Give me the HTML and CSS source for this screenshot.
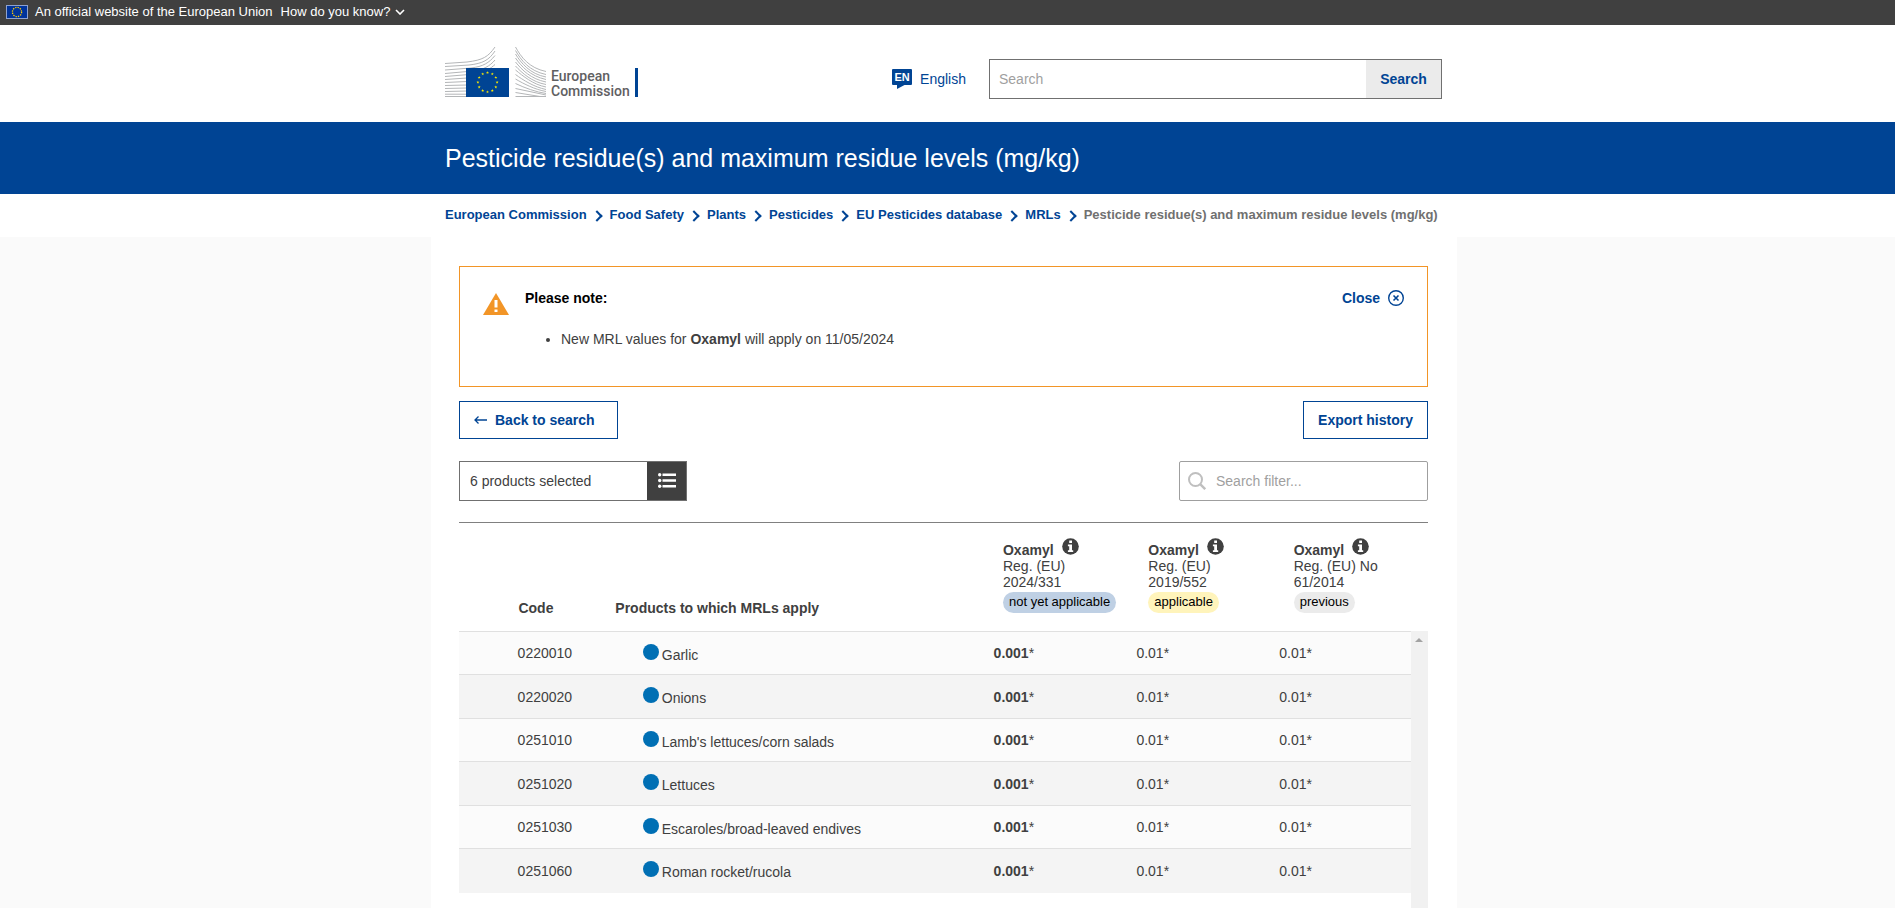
FILE: index.html
```html
<!DOCTYPE html>
<html lang="en">
<head>
<meta charset="utf-8">
<title>Pesticide residue(s) and maximum residue levels (mg/kg)</title>
<link rel="stylesheet" href="styles.css">
</head>
<body>
<svg class="defs" width="0" height="0" aria-hidden="true">
  <defs>
    <path id="star" d="M0-10 2.3-3.1H9.5L3.7 1.2 5.9 8.1 0 3.8-5.9 8.1-3.7 1.2-9.5-3.1H-2.3Z"/>
    <g id="stars">
      <use href="#star" transform="translate(0 -60)"/><use href="#star" transform="translate(30 -52)"/>
      <use href="#star" transform="translate(52 -30)"/><use href="#star" transform="translate(60 0)"/>
      <use href="#star" transform="translate(52 30)"/><use href="#star" transform="translate(30 52)"/>
      <use href="#star" transform="translate(0 60)"/><use href="#star" transform="translate(-30 52)"/>
      <use href="#star" transform="translate(-52 30)"/><use href="#star" transform="translate(-60 0)"/>
      <use href="#star" transform="translate(-52 -30)"/><use href="#star" transform="translate(-30 -52)"/>
    </g>
    <symbol id="info" viewBox="0 0 17 17">
      <circle cx="8.5" cy="8.5" r="8.3" fill="#404040"/>
      <path fill="#fff" d="M7.2 2.6h2.8v2.4H7.2zM5.9 6.4H10v5.8h1.2v1.9H5.9v-1.9h1.3V8.3H5.9z"/>
    </symbol>
  </defs>
</svg>

<div class="globan">
  <svg class="globan-flag" width="20" height="12" viewBox="0 0 20 12" aria-hidden="true">
    <path fill="#039" d="M0 0h20v12H0z"/>
    <circle cx="10" cy="6" r="4.600" fill="none" stroke="#fc0" stroke-width="1.300" stroke-dasharray="1.300 1.108"/>
  </svg>
  <span>An official website of the European Union</span>
  <button class="globan-more" type="button">How do you know?
    <svg width="10" height="6" viewBox="0 0 10 6" aria-hidden="true"><path d="M1 1l4 4 4-4" fill="none" stroke="#fff" stroke-width="1.6"/></svg>
  </button>
</div>

<header class="site-header">
  <div class="container header-row">
    <a class="logo" href="#" aria-label="European Commission">
      <svg width="102" height="52" viewBox="0 0 102 52" aria-hidden="true">
        <g fill="none" stroke="#b4b6b8">
          <path d="M0 16.5L22 15C38 13 43 10 50 0"/>
          <path d="M0 19.5L24 18C38 16.500 44 13 50 4"/>
          <path d="M0 23L26 21C38 19.500 44 16 50 8.500"/>
          <path d="M0 26.500L28 24C38 23 45 19 50 13"/>
          <path d="M0 29.500L30 27C40 26 46 21 50 17.500"/>
          <path d="M0 32.500L22 31M0 35.500L22 34.500M0 38.500L22 38M0 41.500L22 41M0 44.500L22 44M0 47.200H22M0 49.500H22"/>
          <path d="M70.500 0C76 10 84 21 101 24.500"/>
          <path d="M70.500 3.500C76 13 84 24 101 27.500"/>
          <path d="M70.500 7C76 16 85 27 101 30"/>
          <path d="M70.500 11C76 19 85 29 101 32.500"/>
          <path d="M70.500 15C77 23 86 32 101 35"/>
          <path d="M70.500 19C77 26 87 35 101 37.500"/>
          <path d="M70.500 23C78 29 88 37.500 101 40"/>
          <path d="M70.500 27.500C78 33 89 40 101 42.500"/>
          <path d="M70.500 32C79 37 90 42.500 101 44.500"/>
          <path d="M70.500 36.500C80 41 91 45 101 46.500M70.500 41.500L101 48M70.500 45.500L95 49.500M70.500 49.500H101"/>
        </g>
        <path fill="#004494" d="M21 21h43v29H21z"/>
        <g fill="#ffed00" transform="translate(42.500 35.300) scale(.16)"><use href="#stars"/></g>
      </svg>
      <span class="logo-text">European<br>Commission</span>
    </a>
    <div class="tools">
      <a class="lang" href="#">
        <span class="lang-icon" aria-hidden="true">
          <svg width="20" height="20" viewBox="0 0 20 20"><path fill="#004494" d="M1 0h18q1 0 1 1v14q0 1-1 1h-6.500L5 20v-4H1q-1 0-1-1V1q0-1 1-1z"/></svg>
          <span class="lang-code">EN</span>
        </span>
        English
      </a>
      <form class="search" role="search">
        <input type="search" placeholder="Search" aria-label="Search">
        <button type="button">Search</button>
      </form>
    </div>
  </div>
</header>

<div class="banner">
  <div class="container"><h1>Pesticide residue(s) and maximum residue levels (mg/kg)</h1></div>
</div>

<nav class="breadcrumb" aria-label="Breadcrumb">
  <ol class="container">
    <li><a href="#">European Commission</a></li>
    <li><a href="#">Food Safety</a></li>
    <li><a href="#">Plants</a></li>
    <li><a href="#">Pesticides</a></li>
    <li><a href="#">EU Pesticides database</a></li>
    <li><a href="#">MRLs</a></li>
    <li aria-current="page">Pesticide residue(s) and maximum residue levels (mg/kg)</li>
  </ol>
</nav>

<div class="page">
  <main class="panel">
    <section class="alert">
      <svg class="alert-icon" width="26" height="22" viewBox="0 0 26 22" aria-hidden="true">
        <path fill="#f29527" d="M13 0l13 22H0z"/><path fill="#fff" d="M11.500 7h3v7.500h-3zM11.500 16.500h3v2.500h-3z"/>
      </svg>
      <div class="alert-body">
        <h2>Please note:</h2>
        <ul><li>New MRL values for <strong>Oxamyl</strong> will apply on 11/05/2024</li></ul>
      </div>
      <button class="alert-close" type="button">Close
        <svg width="18" height="16" viewBox="0 1 18 16" aria-hidden="true"><g fill="none" stroke="#004494"><circle cx="9" cy="9" r="7.300" stroke-width="1.400"/><path d="M6.500 6.500l5 5m0-5l-5 5" stroke-width="1.600"/></g></svg>
      </button>
    </section>

    <div class="actions">
      <button class="btn btn-back" type="button">
        <svg width="13" height="8" viewBox="0 0 13 8" aria-hidden="true"><path d="M4.500.5L1 4l3.500 3.500M1 4h12" fill="none" stroke="#004494" stroke-width="1.300"/></svg>
        Back to search
      </button>
      <button class="btn" type="button">Export history</button>
    </div>

    <div class="filters">
      <div class="picker">
        <input type="text" value="6 products selected" aria-label="Products" readonly>
        <button type="button" aria-label="Choose products">
          <svg width="18" height="15" viewBox="0 0 18 15" aria-hidden="true"><g fill="#fff"><circle cx="1.700" cy="1.800" r="1.700"/><circle cx="1.700" cy="7.500" r="1.700"/><circle cx="1.700" cy="13.200" r="1.700"/><path d="M4.500.5h13.500v2.500H4.500zM4.500 6.200h13.500v2.500H4.500zM4.500 12h13.500v2.500H4.500z"/></g></svg>
        </button>
      </div>
      <div class="filter">
        <svg width="18" height="18" viewBox="0 0 18 18" aria-hidden="true"><g fill="none" stroke="#bfbfbf" stroke-width="2"><circle cx="7.500" cy="7.500" r="6.500"/><path d="M12.200 12.200l5 5" stroke-width="2.400"/></g></svg>
        <input type="text" placeholder="Search filter..." aria-label="Search filter">
      </div>
    </div>

    <table class="grid grid-head">
      <colgroup><col class="c-pad"><col class="c-code"><col><col class="c-val"><col class="c-val"><col class="c-val"></colgroup>
      <thead>
        <tr>
          <th></th>
          <th scope="col">Code</th>
          <th scope="col">Products to which MRLs apply</th>
          <th scope="col"><div class="sub">Oxamyl <svg width="17" height="17" aria-hidden="true"><use href="#info"/></svg></div><div class="reg">Reg. (EU) 2024/331</div><span class="pill pill-blue">not yet applicable</span></th>
          <th scope="col"><div class="sub">Oxamyl <svg width="17" height="17" aria-hidden="true"><use href="#info"/></svg></div><div class="reg">Reg. (EU) 2019/552</div><span class="pill pill-yellow">applicable</span></th>
          <th scope="col"><div class="sub">Oxamyl <svg width="17" height="17" aria-hidden="true"><use href="#info"/></svg></div><div class="reg">Reg. (EU) No 61/2014</div><span class="pill">previous</span></th>
        </tr>
      </thead>
    </table>
    <div class="grid-scroll">
      <div class="grid-view">
        <table class="grid grid-body">
          <colgroup><col class="c-pad"><col class="c-code"><col><col class="c-val"><col class="c-val"><col class="c-val"></colgroup>
          <tbody>
            <tr><td></td><td>0220010</td><td class="product"><i class="dot"></i>Garlic</td><td><b>0.001</b>*</td><td>0.01*</td><td>0.01*</td></tr>
            <tr><td></td><td>0220020</td><td class="product"><i class="dot"></i>Onions</td><td><b>0.001</b>*</td><td>0.01*</td><td>0.01*</td></tr>
            <tr><td></td><td>0251010</td><td class="product"><i class="dot"></i>Lamb's lettuces/corn salads</td><td><b>0.001</b>*</td><td>0.01*</td><td>0.01*</td></tr>
            <tr><td></td><td>0251020</td><td class="product"><i class="dot"></i>Lettuces</td><td><b>0.001</b>*</td><td>0.01*</td><td>0.01*</td></tr>
            <tr><td></td><td>0251030</td><td class="product"><i class="dot"></i>Escaroles/broad-leaved endives</td><td><b>0.001</b>*</td><td>0.01*</td><td>0.01*</td></tr>
            <tr><td></td><td>0251060</td><td class="product"><i class="dot"></i>Roman rocket/rucola</td><td><b>0.001</b>*</td><td>0.01*</td><td>0.01*</td></tr>
          </tbody>
        </table>
      </div>
      <div class="scroll-track" aria-hidden="true"><svg width="8" height="4" viewBox="0 0 8 4"><path fill="#a3a3a3" d="M4 0l4 4H0z"/></svg></div>
    </div>
  </main>
</div>
</body>
</html>
```
FILE: styles.css
```css
* { box-sizing: border-box; }

body {
  margin: 0;
  min-height: 100vh;
  display: flex;
  flex-direction: column;
  background: #fff;
  color: #404040;
  font: 14px/16px "Liberation Sans", Arial, sans-serif;
}

button, input { font: inherit; color: inherit; margin: 0; }
button { cursor: pointer; }
a { color: #004494; text-decoration: none; }
svg { display: block; flex: none; }
.defs { position: absolute; }

.site-header, .banner, .breadcrumb, .page { padding-right: 7px; }

.container {
  width: 100%;
  max-width: 1026px;
  margin: 0 auto;
  padding: 0 15px 0 14px;
}

.globan {
  display: flex;
  align-items: center;
  height: 25px;
  padding: 0 6px 2px;
  background: #404040;
  color: #fff;
  font-size: 13px;
}
.globan-flag { width: 22px; height: 14px; border: 1px solid #8ea2cf; margin-right: 7px; }
.globan-more {
  display: flex;
  align-items: center;
  gap: 5px;
  margin-left: 8px;
  padding: 0;
  border: 0;
  background: none;
}

.header-row { display: flex; align-items: flex-start; min-height: 97px; padding-top: 22px; }
.logo {
  display: flex;
  align-items: flex-end;
  margin-right: auto;
  padding-right: 6px;
  color: #5f6062;
  font: 500 14px/15px Roboto, "Noto Sans", sans-serif;
  background: linear-gradient(#004494, #004494) right bottom 2px / 3px 29px no-repeat;
}
.logo-text { padding: 0 2px 0 4px; }
.tools { display: flex; flex: 0 1 553px; align-items: center; justify-content: flex-end; padding-top: 12px; }
.lang { display: flex; align-items: center; gap: 8px; margin-right: 23px; }
.lang-icon { position: relative; }
.lang-code {
  position: absolute;
  inset: 0 0 4px;
  color: #fff;
  font-size: 11px;
  font-weight: bold;
  text-align: center;
}
.search { display: flex; flex: 0 1 453px; height: 40px; border: 1px solid #707070; }
.search input { flex: 1; min-width: 0; padding: 0 9px; border: 0; background: #fff; }
.search button { width: 75px; padding: 0; border: 0; background: #ebebeb; color: #004494; font-weight: bold; }
input::placeholder { color: #9f9f9f; opacity: 1; }

.banner { background: #004494; color: #fff; }
.banner h1 { margin: 0; padding: 20px 0; font-size: 25px; line-height: 32px; font-weight: normal; }

.breadcrumb ol { display: flex; flex-wrap: wrap; padding-top: 13px; padding-right: 0; padding-bottom: 14px; list-style: none; }
.breadcrumb li { display: flex; align-items: center; color: #707070; font-size: 13px; font-weight: bold; }
.breadcrumb li + li::before {
  content: "";
  width: 6px;
  height: 6px;
  margin: 2px 9px 0 6px;
  border: solid #004494;
  border-width: 2px 2px 0 0;
  transform: rotate(45deg);
}

.page { display: flex; flex: 1; background: #fafafa; }
.panel {
  display: flex;
  flex-direction: column;
  width: 100%;
  max-width: 1026px;
  margin: 0 auto;
  padding: 29px 29px 0 28px;
  background: #fff;
}

.alert { display: flex; align-items: flex-start; min-height: 121px; padding: 23px 22px 22px 23px; border: 1px solid #f29527; }
.alert-icon { margin: 3px 16px 0 0; }
.alert-body { flex: 1; }
.alert h2 { margin: 0; color: #000; font-size: 14px; line-height: 16px; }
.alert ul { margin: 25px 0 0; padding-left: 36px; }
.alert-close {
  display: flex;
  align-items: center;
  gap: 7px;
  padding: 0;
  border: 0;
  background: none;
  color: #004494;
  font-weight: bold;
}

.actions { display: flex; justify-content: space-between; margin-top: 14px; }
.btn {
  display: flex;
  align-items: center;
  height: 38px;
  padding: 0 14px;
  border: 1px solid #004494;
  background: #fff;
  color: #004494;
  font-weight: bold;
}
.btn-back { gap: 8px; padding-right: 22px; }

.filters { display: flex; justify-content: space-between; margin-top: 22px; }
.picker { display: flex; width: 228px; height: 40px; border: 1px solid #707070; }
.picker input { flex: 1; min-width: 0; padding: 0 10px; border: 0; background: #fff; }
.picker button { display: grid; place-items: center; width: 39px; padding: 0 0 2px; border: 0; background: #404040; }
.filter { display: flex; align-items: center; width: 249px; height: 40px; padding: 0 8px; border: 1px solid #9f9f9f; border-radius: 2px; }
.filter input { flex: 1; min-width: 0; padding: 0 10px; border: 0; background: none; }

.grid { width: 100%; border-collapse: collapse; table-layout: fixed; }
.grid th, .grid td { padding: 0 11px; text-align: left; }
.c-pad { width: 5%; }
.c-code { width: 10%; }
.c-val { width: 15%; }

.grid-head { margin-top: 21px; border-top: 1px solid #808080; }
.grid-head th { padding-top: 15px; padding-bottom: 15px; vertical-align: bottom; }
.grid-head th:nth-child(n+4) { padding-right: 0; padding-bottom: 18px; }
.sub { display: flex; align-items: flex-start; gap: 8px; height: 20px; line-height: 24px; }
.reg { padding-right: 31px; font-weight: normal; }
.pill {
  display: block;
  width: max-content;
  margin-top: 2px;
  padding: 2px 6px 3px;
  border-radius: 11px;
  background: #ebebeb;
  color: #000;
  font-size: 13px;
  font-weight: normal;
}
.pill-blue { background: #bfd0e4; }
.pill-yellow { background: #fff4bb; }

.grid-scroll { display: flex; flex: 1; }
.grid-view { flex: 1; }
.grid-body tr { height: 43px; background: #fbfbfb; }
.grid-body tr:nth-child(even) { height: 44px; background: #f4f4f4; }
.grid-body td { border-top: 1px solid #e0e0e0; }
.grid-body .product { padding-left: 41px; }
.dot { display: inline-block; width: 16px; height: 16px; margin-right: 3px; border-radius: 50%; background: #006fb4; }
.scroll-track { width: 17px; padding: 7px 0 0 4px; background: #f1f1f1; }
```
